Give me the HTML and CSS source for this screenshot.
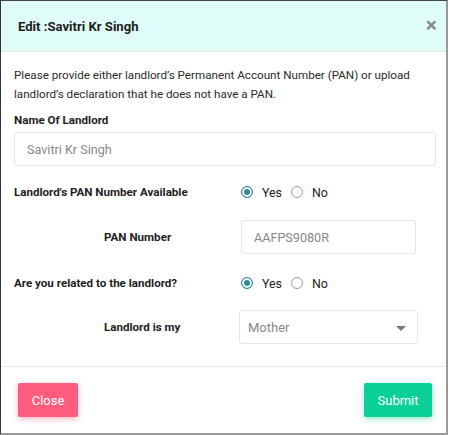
FILE: index.html
```html
<!DOCTYPE html>
<html>
<head>
<meta charset="utf-8">
<link rel="stylesheet" href="styles.css">
</head>
<body>
<div class="dialog">
  <div class="header">
    <h4 class="title">Edit :Savitri Kr Singh</h4>
    <span class="close-x">&times;</span>
  </div>
  <div class="body">
    <p class="intro">Please provide either landlord’s Permanent Account Number (PAN) or upload landlord’s declaration that he does not have a PAN.</p>
    <label class="lbl block">Name Of Landlord</label>
    <div class="input full">Savitri Kr Singh</div>
    <div class="row r-pan-avail">
      <div class="col-l lbl">Landlord's PAN Number Available</div>
      <div class="col-r radios">
        <span class="radio on"></span><span class="rtext">Yes</span>
        <span class="radio"></span><span class="rtext">No</span>
      </div>
    </div>
    <div class="row r-pan">
      <div class="col-l lbl indent">PAN Number</div>
      <div class="col-r"><div class="input pan">AAFPS9080R</div></div>
    </div>
    <div class="row r-rel">
      <div class="col-l lbl">Are you related to the landlord?</div>
      <div class="col-r radios">
        <span class="radio on"></span><span class="rtext">Yes</span>
        <span class="radio"></span><span class="rtext">No</span>
      </div>
    </div>
    <div class="row r-sel">
      <div class="col-l lbl indent">Landlord is my</div>
      <div class="col-r"><div class="input select">Mother<span class="caret"></span></div></div>
    </div>
  </div>
  <div class="footer">
    <button class="btn btn-close">Close</button>
    <button class="btn btn-submit">Submit</button>
  </div>
</div>
</body>
</html>
```
FILE: styles.css
```css
* { box-sizing: border-box; }
html, body { margin: 0; padding: 0; background: #fff; }
body { font-family: Roboto, "Liberation Sans", Arial, sans-serif; color: #212529; font-size: 12px; }
.dialog {
  width: 448px;
  height: 435px;
  border-left: 1px solid #333;
  border-top: 1px solid #444;
  border-right: 2px solid #999;
  border-bottom: 2px solid #999;
  background: #fff;
  display: flex;
  flex-direction: column;
}
.header {
  height: 51px;
  background: #e0fcf8;
  border-bottom: 1px solid #e6e9ec;
  display: flex;
  align-items: center;
  justify-content: space-between;
  padding: 0 9px 0 17px;
}
.title { margin: 0; font-size: 13.1px; font-weight: 700; color: #1e1e1e; margin-top: 1px; }
.close-x { font-size: 21px; font-weight: 700; color: #8a8a8a; line-height: 1; margin-top: -1px; }
.body { padding: 14px 13px 0 13px; flex: 1; border-bottom: 1px solid #e6e9ec; }
.intro { margin: 0 0 9px; line-height: 19px; color: #2a2a2a; font-size: 11.65px; }
.lbl { font-weight: 700; color: #1e1e1e; font-size: 11.6px; }
.block { display: block; margin-bottom: 5px; }
.input {
  height: 34px;
  border: 1px solid #e2e6ea;
  border-radius: 3px;
  color: #888;
  font-size: 12.6px;
  display: flex;
  align-items: center;
  padding: 0 12px;
}
.full { width: 422px; }
.row { display: flex; align-items: center; }
.col-l { width: 226px; flex: none; }
.indent { padding-left: 90px; }
.r-pan-avail { margin-top: 18px; height: 16px; }
.r-pan { margin-top: 20px; }
.r-rel { margin-top: 21px; height: 16px; }
.r-sel { margin-top: 19px; }
.pan { width: 175px; margin-left: 1px; }
.select { width: 179px; margin-left: -1px; position: relative; padding-left: 8px; font-size: 13px; }
.caret { position: absolute; right: 11px; top: 15px; width: 0; height: 0; border-left: 5px solid transparent; border-right: 5px solid transparent; border-top: 5px solid #777; }
.radios { display: flex; align-items: center; padding-left: 1px; }
.radio {
  width: 12px; height: 12px; border-radius: 50%;
  border: 1px solid #9a9a9a; background: #fff;
  display: inline-block; flex: none;
}
.radio.on { background: #2e8a9c; border-color: #2e8a9c; box-shadow: inset 0 0 0 2px #fff; }
.rtext { margin: 0 9px 0 9px; color: #222; font-size: 12.4px; }
.footer { height: 66px; display: flex; align-items: center; justify-content: space-between; padding: 0 14px 0 17px; }
.btn {
  height: 34px; border: none; border-radius: 2px; color: #fff;
  font-family: Roboto, "Liberation Sans", Arial, sans-serif; font-size: 13px; padding: 0;
}
.btn-close { width: 60px; background: #fc5c7d; box-shadow: 0 2px 6px rgba(252,92,125,.45); }
.btn-submit { width: 68px; background: #0acf97; box-shadow: 0 2px 6px rgba(10,207,151,.45); }
```
